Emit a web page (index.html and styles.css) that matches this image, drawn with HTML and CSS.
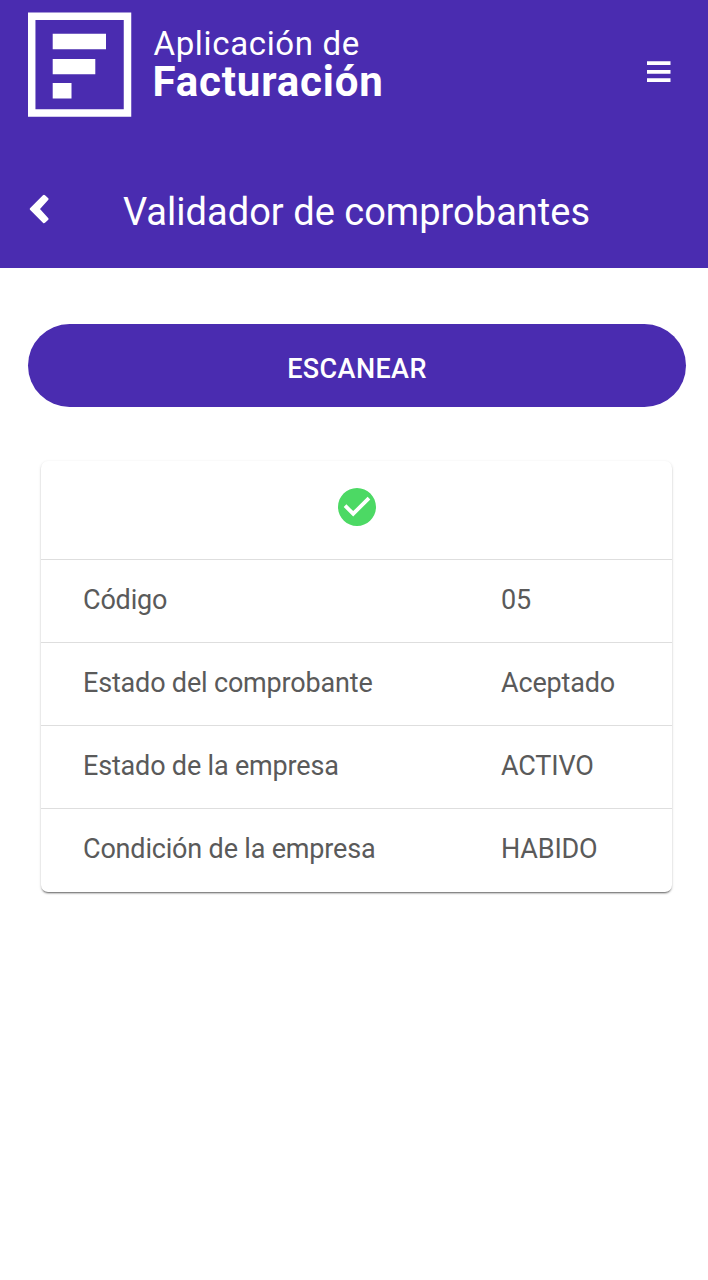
FILE: index.html
```html
<!DOCTYPE html>
<html lang="es">
<head>
<meta charset="utf-8">
<title>Validador de comprobantes</title>
<link rel="stylesheet" href="styles.css">
</head>
<body>
<header class="header">
  <div class="brand-bar">
    <svg class="logo" viewBox="0 0 104 105"><path fill="none" stroke="#fff" stroke-width="7.500" d="M3.700 4.300h95.800v96.600H3.700z"/><path fill="#fff" d="M24.700 21.700h53.300v15.600H24.700zM24.700 47h42.600v15.300H24.700zM24.700 71h18.800v15.500H24.700z"/></svg>
    <div class="brand"><span class="brand-top">Aplicación de</span><strong class="brand-name">Facturación</strong></div>
    <svg class="menu" viewBox="0 0 24 22"><path fill="#fff" d="M0 .3h23.500v3.800H0zM0 8.900h23.500v3.800H0zM0 17.200h23.500V21H0z"/></svg>
  </div>
  <div class="title-bar">
    <svg class="back" viewBox="0 0 20 30"><path fill="#fff" stroke="#fff" stroke-width="3" stroke-linejoin="round" d="M2.300 15L15 2.300 18 5 9 15l9 10-3 2.700z"/></svg>
    <h1 class="title">Validador de comprobantes</h1>
  </div>
</header>
<main class="content">
  <button class="scan">ESCANEAR</button>
  <section class="card">
    <div class="status"><svg class="check" viewBox="2 2 20 20"><path fill="#4cd964" d="M12 2C6.480 2 2 6.480 2 12s4.480 10 10 10 10-4.480 10-10S17.520 2 12 2zm-2 15l-5-5 1.410-1.410L10 14.170l7.590-7.590L19 8l-9 9z"/></svg></div>
    <div class="row"><span>Código</span><span>05</span></div>
    <div class="row"><span>Estado del comprobante</span><span>Aceptado</span></div>
    <div class="row"><span>Estado de la empresa</span><span>ACTIVO</span></div>
    <div class="row"><span>Condición de la empresa</span><span>HABIDO</span></div>
  </section>
</main>
</body>
</html>
```
FILE: styles.css
```css
* { box-sizing: border-box; }
body { margin: 0; min-height: 1280px; background: #fff; font-family: Roboto, sans-serif; }
.header { height: 268px; background: #4a2cb0; color: #fff; }
.brand-bar { display: flex; height: 154px; padding: 12px 37px 0 27.500px; }
.logo { width: 104px; height: 105px; }
.brand { display: flex; flex-direction: column; flex: 1; padding: 13px 0 0 21px; }
.brand-top { padding-left: 1px; font-size: 33px; line-height: 38px; letter-spacing: 0.650px; }
.brand-name { font-size: 42px; line-height: 37px; font-weight: 700; letter-spacing: 0.850px; }
.menu { width: 24px; height: 22px; margin-top: 49px; }
.title-bar { display: flex; align-items: center; height: 114px; padding-left: 29px; }
.back { width: 20px; height: 30px; margin-bottom: 4px; }
.title { margin: 1px 0 0 74px; font-size: 38px; line-height: 44px; font-weight: 400; letter-spacing: 0.020px; }
.content { padding: 56px 22px 0 28px; }
.scan { display: block; width: 100%; height: 83px; padding: 6px 0 0; border: 0; border-radius: 42px; background: #4a2cb0; color: #fff; font: 500 27px Roboto, sans-serif; letter-spacing: 0.400px; }
.card { margin: 54px 14px 0 13px; height: 431px; border-radius: 7px; background: #fff; box-shadow: 0 2px 2px -1px rgba(0,0,0,.55), 0 1px 3px rgba(0,0,0,.16); }
.status { display: flex; justify-content: center; height: 98px; padding-top: 27px; }
.check { width: 38px; height: 38px; }
.row { display: grid; grid-template-columns: 418px 1fr; height: 83px; padding: 24px 0 0 42px; border-top: 1px solid #dedede; color: #5a5a5a; font-size: 27px; line-height: 32px; letter-spacing: -0.180px; }
```
